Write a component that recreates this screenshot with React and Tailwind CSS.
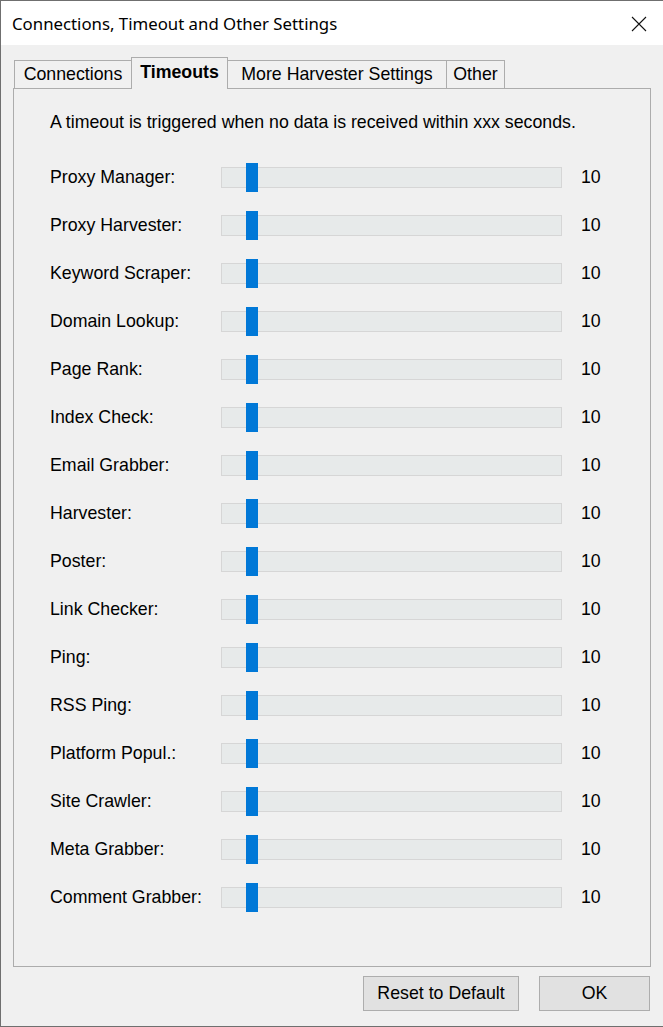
import React from 'react'

const TIMEOUTS = [
  'Proxy Manager:',
  'Proxy Harvester:',
  'Keyword Scraper:',
  'Domain Lookup:',
  'Page Rank:',
  'Index Check:',
  'Email Grabber:',
  'Harvester:',
  'Poster:',
  'Link Checker:',
  'Ping:',
  'RSS Ping:',
  'Platform Popul.:',
  'Site Crawler:',
  'Meta Grabber:',
  'Comment Grabber:',
]

function Tab({ label, active, width }) {
  if (active) {
    return (
      <div
        className="h-[32px] -mb-px -ml-px relative z-10 pt-[3px] text-center border border-b-0 border-[#acacac] bg-[#f0f0f0] font-bold text-[17.75px] text-black"
        style={{ width }}
      >
        {label}
      </div>
    )
  }
  return (
    <div
      className="h-[28px] -ml-px pt-[2px] text-center border border-b-0 border-[#acacac] bg-[#f0f0f0] text-[17.75px] text-black"
      style={{ width }}
    >
      {label}
    </div>
  )
}

function TimeoutRow({ label, value }) {
  return (
    <div className="flex items-center h-[48px]">
      <div className="w-[171px] text-[17.75px] text-black">{label}</div>
      <div className="relative w-[341px] h-[21px] border border-[#d6d6d6] bg-[#e7eaea]">
        {/* slider thumb */}
        <div className="absolute left-[24px] top-[-5px] w-[12px] h-[29px] bg-[#0078d7]" />
      </div>
      <div className="ml-[19px] text-[17.75px] text-black">{value}</div>
    </div>
  )
}

export default function App() {
  return (
    <div
      className="w-[663px] h-[1027px] flex flex-col bg-[#f0f0f0] border-t border-l border-b border-[#6f6f6f] overflow-hidden"
      style={{ fontFamily: '"Liberation Sans", Arial, sans-serif' }}
    >
      {/* title bar */}
      <div className="h-[44px] shrink-0 bg-white flex items-center justify-between pl-[11px] pr-[16px]">
        <span
          className="text-[16.8px] text-black mt-[2px]"
          style={{ fontFamily: '"Noto Sans", "Open Sans", sans-serif' }}
        >
          Connections, Timeout and Other Settings
        </span>
        <svg width="16" height="16" viewBox="0 0 16 16" className="mt-[1px]">
          <path d="M1 1 L15 15 M15 1 L1 15" stroke="#111" strokeWidth="1.1" fill="none" />
        </svg>
      </div>

      <div className="flex-1 flex flex-col pl-[12px] pr-[12px]">
        {/* tab strip */}
        <div className="flex items-end h-[43px] pl-[2px] leading-[22px]">
          <Tab label="Connections" width={118} />
          <Tab label="Timeouts" width={97} active />
          <Tab label="More Harvester Settings" width={220} />
          <Tab label="Other" width={59} />
        </div>

        {/* tab page */}
        <div className="w-[638px] h-[879px] border border-[#acacac] bg-[#f0f0f0] pl-[36px] pt-[24px]">
          <div className="text-[17.75px] leading-[18px] text-black">
            A timeout is triggered when no data is received within xxx seconds.
          </div>
          <div className="mt-[22px] flex flex-col">
            {TIMEOUTS.map((t) => (
              <TimeoutRow key={t} label={t} value={10} />
            ))}
          </div>
        </div>

        {/* dialog buttons */}
        <div className="flex justify-end gap-[20px] mt-[9px] pr-[1px]">
          <button className="w-[156px] h-[35px] border border-[#adadad] bg-[#e1e1e1] text-[17.75px] text-black">
            Reset to Default
          </button>
          <button className="w-[111px] h-[35px] border border-[#adadad] bg-[#e1e1e1] text-[17.75px] text-black">
            OK
          </button>
        </div>
      </div>
    </div>
  )
}
